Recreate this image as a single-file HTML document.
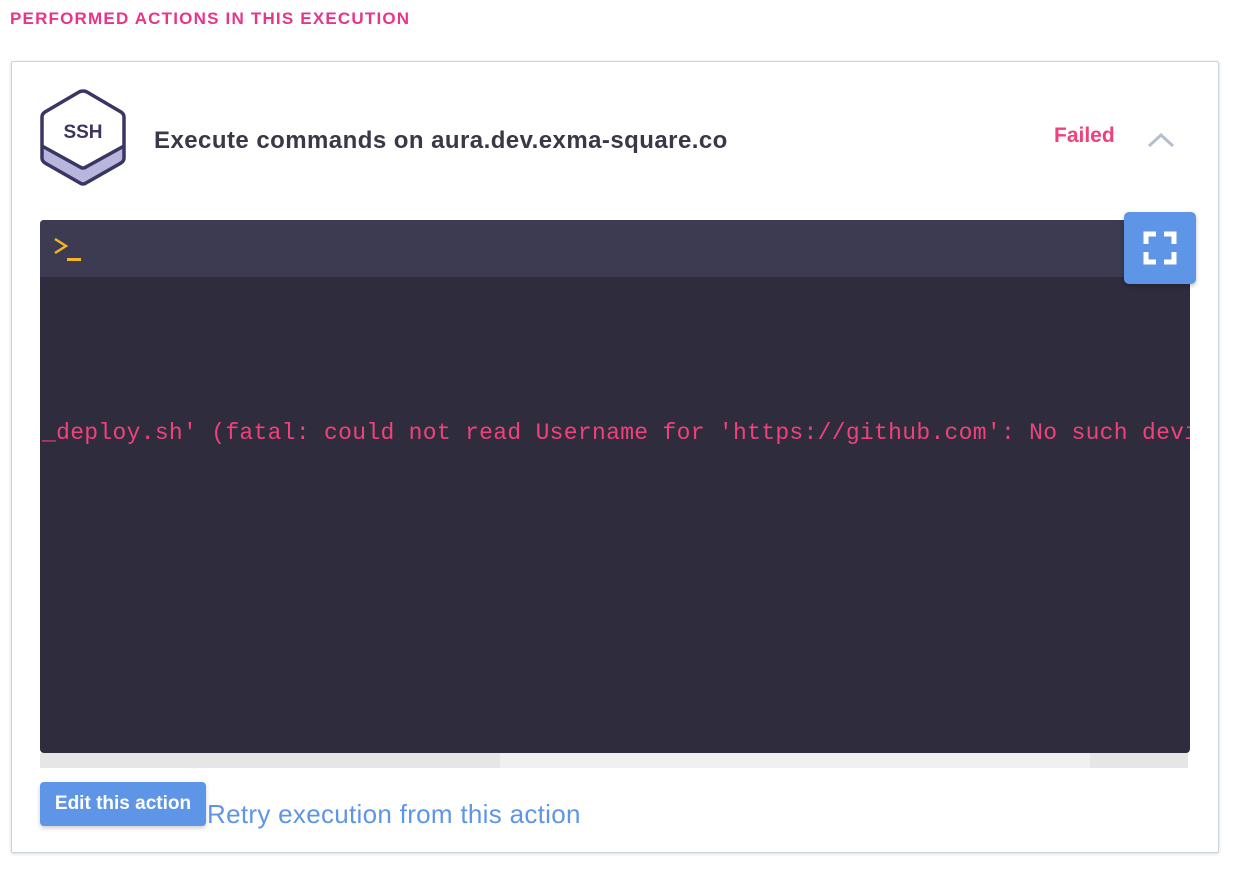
<!DOCTYPE html>
<html><head><style>
body{margin:0;width:1240px;height:870px;background:#fff;font-family:"Liberation Sans",sans-serif;position:relative;overflow:hidden}
.h{position:absolute;left:10px;top:9px;font-size:17px;font-weight:bold;color:#e8358a;letter-spacing:1.2px;white-space:nowrap}
.card{position:absolute;left:11px;top:61px;width:1206px;height:790px;border:1px solid #c9d3e0;border-radius:2px;box-shadow:0 1px 3px rgba(0,0,0,.15)}
.title{position:absolute;left:154px;top:127px;font-size:24px;font-weight:bold;color:#3a3848;letter-spacing:0.45px;white-space:nowrap}
.failed{position:absolute;left:1054px;top:124px;font-size:21px;font-weight:bold;color:#f0417a}
.term{position:absolute;left:40px;top:220px;width:1150px;height:533px;background:#2f2d3d;border-radius:4px;overflow:hidden}
.th{height:57px;background:#3c3b52}
.msg{position:absolute;left:2px;top:200px;font-family:"Liberation Mono",monospace;font-size:23px;color:#f0417a;white-space:nowrap;letter-spacing:0.3px}
.sb{position:absolute;left:40px;top:753px;width:1148px;height:15px;background:#e6e6e6}
.sb div{position:absolute;left:460px;width:590px;height:15px;background:#f0f0f0}
.fs{position:absolute;left:1124px;top:212px;width:72px;height:72px;background:#5f95e6;border-radius:5px;box-shadow:0 2px 4px rgba(0,0,0,.25)}
.btn{position:absolute;left:40px;top:782px;width:166px;height:44px;background:#5f95e6;border-radius:4px;color:#fff;font-weight:bold;font-size:19px;line-height:44px;text-align:center;box-shadow:0 2px 4px rgba(0,0,0,.2)}
.retry{position:absolute;left:207px;top:799px;font-size:26px;letter-spacing:0.3px;color:#5f95e6;white-space:nowrap}
</style></head><body>
<div class="h">PERFORMED ACTIONS IN THIS EXECUTION</div>
<div class="card"></div>
<svg style="position:absolute;left:38px;top:88px" width="90" height="100" viewBox="0 0 90 100">
<path d="M4 60 L4 70 Q4 73 7 75 L42 95 Q45 97 48 95 L83 75 Q86 73 86 70 L86 58 L45 80 Z" fill="#b8b6dc"/>
<path d="M45 3 Q47 3 49 4 L83 24 Q86 26 86 29 L86 70 Q86 73 83 75 L48 95 Q45 97 42 95 L7 75 Q4 73 4 70 L4 29 Q4 26 7 24 L41 4 Q43 3 45 3 Z" fill="none" stroke="#3b3563" stroke-width="3.5"/>
<path d="M4 58 L42 79 Q45 81 48 79 L86 58" fill="none" stroke="#3b3563" stroke-width="3.5"/>
<text x="45" y="50" text-anchor="middle" font-family="Liberation Sans" font-weight="bold" font-size="19" fill="#3b3563">SSH</text>
</svg>
<div class="title">Execute commands on aura.dev.exma-square.co</div>
<div class="failed">Failed</div>
<svg style="position:absolute;left:1146px;top:131px" width="30" height="18"><path d="M3 15 L15 4 L27 15" fill="none" stroke="#b4bfd0" stroke-width="3"/></svg>
<div class="term"><div class="th"></div>
<svg style="position:absolute;left:13px;top:16px" width="30" height="28"><path d="M2 3 L13 10 L2 17" fill="none" stroke="#f5b325" stroke-width="2.5"/><rect x="14" y="22" width="14" height="3" fill="#f5b325"/></svg>
<div class="msg">_deploy.sh' (fatal: could not read Username for 'https://github.com': No such devi</div></div>
<div class="sb"><div></div></div>
<div class="fs"><svg width="72" height="72"><path d="M22 32 V22 H32 M40 22 H50 V32 M50 40 V50 H40 M32 50 H22 V40" fill="none" stroke="#fff" stroke-width="5"/></svg></div>
<div class="btn">Edit this action</div>
<div class="retry">Retry execution from this action</div>
</body></html>
